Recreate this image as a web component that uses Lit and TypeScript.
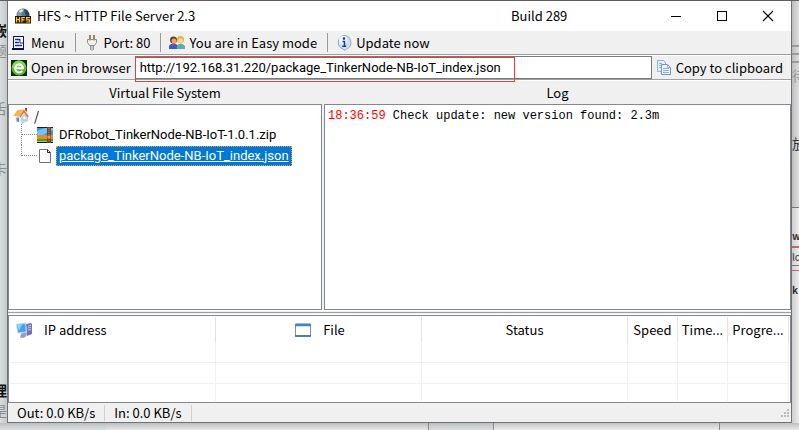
import { LitElement, html, css, svg } from "lit";
import { customElement, property } from "lit/decorators.js";

const icons: Record<string, unknown> = {
  hfs: svg`
    <circle cx="8" cy="7" r="6.5" fill="#4f7fa8"/>
    <path d="M2 5C4 1 8 0 10 1L8 4 6 5 7 8 3 9Z" fill="#8c9a94"/>
    <path d="M9 1c4 1 6 4 5 8l-3-1-1-3z" fill="#2b4257"/>
    <path d="M4 3l3-2 1 2-3 2z" fill="#dfe8ea"/>
    <rect x="0" y="8" width="16" height="7.500" fill="#1c1400"/>
    <path d="M1.500 9v5.500M4.500 9v5.500M1.500 11.700h3M6.900 14.500V9.600h3.100M6.900 11.800h2.600M14.900 9.600h-3.300v2.200h3v2.200h-3.400" fill="none" stroke="#ffc61a" stroke-width="1.200"/>`,
  menu: svg`
    <rect x="2.500" y="1.500" width="10" height="12" fill="#fff" stroke="#101060"/>
    <path d="M4 4.500h5M4 7.500h4M4 10.500h7" stroke="#1726b8" stroke-width="1.400"/>
    <path d="M1 14h12" stroke="#101030" stroke-width="2"/>
    <path d="M9 4v4h3" fill="none" stroke="#1726b8"/>`,
  plug: svg`
    <path d="M6 0v4M10 0v4" stroke="#7c6a3a" stroke-width="1.600"/>
    <path d="M3.500 4.500h9v3l-2 3h-5l-2-3z" fill="#f1f1ee" stroke="#8b8b86"/>
    <path d="M5 5h2M9 5h2" stroke="#c9a13c"/>
    <path d="M6.500 11v4M9.500 11v4M8 11v5" stroke="#9a9a98"/>`,
  users: svg`
    <circle cx="4.500" cy="5" r="3.500" fill="#6b3a1e"/>
    <circle cx="5" cy="6" r="2.500" fill="#e9a376"/>
    <path d="M0 14V11q1-2.500 4.500-2.500T9 11v3z" fill="#2f62c4"/>
    <path d="M3 9l2 3 1-3z" fill="#d33"/>
    <circle cx="11.500" cy="4.500" r="3.500" fill="#e8b13c"/>
    <circle cx="11.500" cy="5.500" r="2.300" fill="#ffd9a8"/>
    <path d="M8 14V11q1-2.500 3.500-2.500T16 11v3z" fill="#58b0a2"/>`,
  info: svg`
    <path d="M8 .5a7 7 0 0 1 2.500 13.500L9 15.500 7 14A7 7 0 0 1 8 .5z" fill="#cfe0f4" stroke="#8aa9cf"/>
    <circle cx="7" cy="5" r="4" fill="#f2f8ff"/>
    <circle cx="8" cy="3.600" r="1.300" fill="#1d3f96"/>
    <path d="M6.500 6.500h2v4.500M6.200 11.200h4" fill="none" stroke="#1d3f96" stroke-width="1.500"/>`,
  browser: svg`
    <rect width="16" height="16" fill="#0d2b0a"/>
    <circle cx="8" cy="8" r="7.500" fill="#5cb531"/>
    <path d="M1 8a7 7 0 0 1 14-1c-5-2-9 1-14 1z" fill="#86d25c"/>
    <path d="M4.500 8.300h7.500A4 4 0 1 0 11.200 10.800" fill="none" stroke="#fff" stroke-width="2"/>`,
  copy: svg`
    <path d="M1.500 .5h6l2 2v9h-8z" fill="#e6f0fc" stroke="#8fb0dd"/>
    <path d="M3 3.500h3M3 5.500h3M3 7.500h3" stroke="#8fb0dd"/>
    <path d="M5.500 4.500h6l3 3v7h-9z" fill="#eef5fe" stroke="#6f94cc"/>
    <path d="M11.500 4.500v3h3M7 8.500h6M7 10.500h6M7 12.500h6" fill="none" stroke="#8fb0dd"/>`,
  home: svg`
    <path d="M2.500 7L6 5l4 4v6.500L2.500 13z" fill="#e3ecf7"/>
    <path d="M8 10l4-5 3 4v4l-6 2.500H8z" fill="#bcd0ea"/>
    <path d="M0 8L4.500 2 11 1.500 6.500 8.500z" fill="#f9b552"/>
    <path d="M11 1.500l5 7-1.500.8L11 4.500 7.500 9.500l-1-1z" fill="#e27a2e"/>
    <path d="M12 0h2v4l-2-2z" fill="#c43a2a"/>
    <path d="M3.500 9.500H6v4.700L3.500 13.300z" fill="#5d8fd0"/>
    <path d="M10.500 8.500h2V11h-2z" fill="#fff"/>`,
  zip: svg`
    <rect width="16" height="16" fill="#1b1b1b"/>
    <path d="M0 1h16v7H0z" fill="#2f9be0"/>
    <path d="M0 4L8 1h8v2L6 8H0z" fill="#6cc5f5"/>
    <path d="M0 8h16v4H0z" fill="#e8892a"/>
    <path d="M0 12h16v3H0z" fill="#4f9a2e"/>
    <path d="M0 14h16v1H0z" fill="#9bcf3a"/>
    <path d="M10 0h4v16h-4z" fill="#7a3f1d"/>
    <path d="M12 1v14" stroke="#c9a888" stroke-dasharray="1 1"/>
    <path d="M10.500 8.500h3v3h-3z" fill="#e0a060"/>`,
  page: svg`
    <path d="M2.500 1.500h8l3 3v10h-11z" fill="#fff" stroke="#757575"/>
    <path d="M10.500 1.500v3h3" fill="none" stroke="#222"/>`,
  computer: svg`
    <path d="M10 2l5-1 1 1v10l-5 2z" fill="#7474b4"/>
    <path d="M12 4l3-.5M12 6l3-.5M12 8l3-.5" stroke="#c3c3ea"/>
    <path d="M0 2l10-1.500 1 10-9.500 1z" fill="#b9cdec"/>
    <path d="M1.300 3l7.700-1 .8 7.500-7.500.8z" fill="#3da5ee"/>
    <path d="M1.300 3l5-.7L3 9z" fill="#8ad2fb"/>
    <path d="M5 11.500l4-1 2 1-1 3-3 1.500-3-.5z" fill="#9c9cc4"/>`,
  frame: svg`
    <rect x=".5" y="2" width="15" height="12" rx="1" fill="#fff" stroke="#7e8fb8"/>
    <path d="M0 3h16" stroke="#3a86d4" stroke-width="2.500"/>
    <path d="M0 14h16" stroke="#27479c" stroke-width="1.300"/>`,
  minimize: svg`<path d="M3 8.500h10" stroke="#000"/>`,
  maximize: svg`<rect x="3.500" y="3.500" width="9" height="9" fill="none" stroke="#000"/>`,
  close: svg`<path d="M3 3l10 10M13 3L3 13" stroke="#000" stroke-width="1.100"/>`,
  grip: svg`<path d="M12 4h2v2h-2zM9 7h2v2H9zM12 7h2v2h-2zM6 10h2v2H6zM9 10h2v2H9zM12 10h2v2h-2z" fill="#bcbcbc"/>`,
};

@customElement("hfs-icon")
class HfsIcon extends LitElement {
  @property() name = "";
  static styles = css`
    :host { display: block; flex: none; width: 16px; height: 16px; }
    .art { display: block; width: 16px; height: 16px; }
  `;
  render() {
    return html`<svg class="art" viewBox="0 0 16 16" aria-hidden="true">${icons[this.name]}</svg>`;
  }
}

const tools = [
  { icon: "menu", label: "Menu" },
  { icon: "plug", label: "Port: 80" },
  { icon: "users", label: "You are in Easy mode" },
  { icon: "info", label: "Update now" },
];

@customElement("app-root")
class AppRoot extends LitElement {
  static styles = css`
    * { box-sizing: border-box; }
    :host {
      display: grid;
      grid-template: 1px 1fr 7px / 7px minmax(0, 1fr) 7px;
      height: 100vh;
      overflow: hidden;
      font: 13px/16px "Noto Sans CJK SC", "Noto Sans", sans-serif;
      color: #000;
      background: #d6dadb;
    }
    .above { grid-column: 1 / -1; background: #625c5e; }
    .side { overflow: hidden; display: flex; flex-direction: column; font-size: 14px; line-height: 20px; }
    .side span { flex: none; height: 20px; white-space: nowrap; }
    .left { align-items: flex-end; background: linear-gradient(90deg, #d9dddd, #c5c9c9); color: #8a8c8c; padding-top: 19px; }
    .left .strong { color: #111; font-weight: 700; }
    .gap-l { margin-top: 38px; }
    .gap-m { margin-top: 40px; }
    .gap-xl { margin-top: 202px; }
    .right { background: linear-gradient(90deg, #bdbdbd, #dedede); color: #333; }
    .right .lines { height: 18px; margin-top: 44px; border: solid #999; border-width: 2px 0; background: linear-gradient(#999, #999) center / 100% 2px no-repeat; }
    .right .faint { color: #999; margin-top: 2px; }
    .right .word { margin-top: 48px; }
    .right .sheet { margin-top: 54px; flex: 1; border-top: 1px solid #777; background: linear-gradient(90deg, #cfcfcf, #ececec); font-size: 10px; font-weight: 700; }
    .right .sheet span { display: block; }
    .sheet .top { margin-top: 18px; }
    .sheet .rule { border-top: 2px solid #b96a6a; border-bottom: 1px solid #777; font-weight: 400; line-height: 17px; }
    .sheet .tab { border-top: 1px solid #e55; margin-top: 4px; line-height: 38px; }
    .below { grid-column: 1 / -1; display: flex; background: linear-gradient(#bcbfbf, #dde0e0); }
    .below i { border-right: 1px solid #888; }
    .below .b1 { flex: 106; border: 0; }
    .b2 { flex: 324; background: linear-gradient(#bebebe, #e8e8e8); }
    .b3 { flex: 64; }
    .b4 { flex: 226; background: linear-gradient(#c4c4c4, #eee); }
    .below .b5 { flex: 79; border: 0; background: linear-gradient(#c0c0c0, #eaeaea); }

    .window { display: flex; flex-direction: column; min-width: 0; border: 1px solid #6f7274; border-top: 0; background: #f0f0f0; }
    button { display: flex; align-items: center; gap: 4px; margin: 0; padding: 0; border: 0; background: none; font: inherit; color: inherit; white-space: nowrap; }
    .title { display: flex; align-items: center; height: 30px; padding-left: 7px; background: #fff; }
    .title h1 { margin: 0 0 0 6px; font: inherit; flex: 1; }
    .build { width: 142px; }
    .title button { width: 46px; height: 30px; justify-content: center; }
    .tools { display: flex; align-items: center; height: 24px; padding-left: 3px; border-bottom: 1px solid #a0a0a0; }
    .tools button { padding-right: 10px; }
    .tools button + button { border-left: 1px solid #999; padding-left: 8px; height: 19px; }
    .address { display: flex; align-items: center; height: 25px; padding: 1px 8px 1px 3px; border-bottom: 1px solid #a0a0a0; border-top: 1px solid #fff; }
    .field { position: relative; flex: 1; margin: 0 4px; height: 23px; }
    .field input { display: block; width: 100%; height: 23px; padding: 0 4px; border: 1px solid #7a7a7a; background: #fff; font: 13px Roboto, sans-serif; color: inherit; outline: 0; }
    .mark { position: absolute; left: 0; top: 1px; width: 380px; height: 25px; border: 1px solid #f0393c; pointer-events: none; }
    .panes { display: grid; grid-template-columns: minmax(0, 314fr) minmax(0, 467fr); column-gap: 2px; flex: 1; min-height: 0; border-top: 1px solid #fff; }
    .pane { display: flex; flex-direction: column; min-height: 0; }
    .pane h2 { margin: 0; height: 23px; font: inherit; line-height: 24px; text-align: center; }
    .box { flex: 1; border: 1px solid #828790; background: #fff; }
    .tree { padding: 2px 0 0 4px; }
    .tree ul { list-style: none; margin: 0 0 0 8px; padding: 0; }
    .node { display: flex; align-items: center; gap: 5px; height: 17px; }
    .tree li { display: flex; align-items: center; height: 21px; }
    .branch { width: 16px; height: 21px; border-left: 1px dotted #888; background: repeating-linear-gradient(90deg, #888 0 1px, #fff 1px 2px) 0 10px / 100% 1px no-repeat; }
    .last .branch { height: 11px; align-self: flex-start; }
    .name { margin-left: 3px; border: 1px solid transparent; padding: 0 2px; height: 20px; font: 13px/18px Roboto, sans-serif; color: inherit; text-decoration: none; }
    .last .name { border: 1px dotted #ff9a3c; background: #0078d7; color: #fff; text-decoration: underline; }
    .log { padding: 3px; font: 12px/16px "Liberation Mono", monospace; }
    .log time { color: #f00; }
    .split { height: 5px; border-bottom: 1px solid #fff; border-top: 1px solid #fff; background: linear-gradient(#a0a0a0, #a0a0a0) 0 1px / 100% 1px no-repeat #f0f0f0; }
    .list { height: 88px; border: 1px solid #828790; background: #fff; padding: 1px; }
    table { width: 100%; table-layout: fixed; border-collapse: separate; border-spacing: 0; }
    .c1 { width: 206px; } .c2 { width: 206px; } .c3 { width: 50px; } .c4 { width: 61px; }
    th { height: 25px; padding: 0 3px; font-weight: 400; border-right: 1px solid #e2e2e2; overflow: hidden; white-space: nowrap; }
    td { height: 21px; padding: 0; border-right: 1px solid #f0f0f0; border-bottom: 1px solid #f0f0f0; }
    tr:last-child td { height: 17px; border-bottom: 0; }
    .cell { display: flex; align-items: center; gap: 12px; padding-left: 3px; }
    .mid { justify-content: center; }
    .status { display: flex; align-items: center; height: 19px; }
    .status span { padding: 0 9px; border-right: 1px solid #d0d0d0; }
    .status hfs-icon { margin-left: auto; }
  `;

  render() {
    return html`
      <div class="above"></div>
      <div class="side left">
        <span class="strong">嵌</span><span>题</span><span class="gap-l">舌</span>
        <span class="gap-m">卡</span><span class="strong gap-xl">理</span><span>是</span>
      </div>
      <main class="window">
        <header class="title">
          <hfs-icon name="hfs"></hfs-icon>
          <h1>HFS ~ HTTP File Server 2.3</h1>
          <span class="build">Build 289</span>
          ${["minimize", "maximize", "close"].map((n) => html`<button aria-label=${n}><hfs-icon name=${n}></hfs-icon></button>`)}
        </header>
        <nav class="tools">
          ${tools.map((t) => html`<button><hfs-icon name=${t.icon}></hfs-icon>${t.label}</button>`)}
        </nav>
        <div class="address">
          <button><hfs-icon name="browser"></hfs-icon>Open in browser</button>
          <div class="field">
            <input aria-label="Address" .value=${"http://192.168.31.220/package_TinkerNode-NB-IoT_index.json"} />
            <div class="mark"></div>
          </div>
          <button><hfs-icon name="copy"></hfs-icon>Copy to clipboard</button>
        </div>
        <div class="panes">
          <section class="pane">
            <h2>Virtual File System</h2>
            <div class="box tree">
              <div class="node"><hfs-icon name="home"></hfs-icon>/</div>
              <ul>
                <li><span class="branch"></span><hfs-icon name="zip"></hfs-icon><a class="name" href="#zip">DFRobot_TinkerNode-NB-IoT-1.0.1.zip</a></li>
                <li class="last"><span class="branch"></span><hfs-icon name="page"></hfs-icon><a class="name" href="#json">package_TinkerNode-NB-IoT_index.json</a></li>
              </ul>
            </div>
          </section>
          <section class="pane">
            <h2>Log</h2>
            <div class="box log"><time>18:36:59</time> Check update: new version found: 2.3m</div>
          </section>
        </div>
        <div class="split"></div>
        <div class="list">
          <table>
            <colgroup><col class="c1" /><col class="c2" /><col /><col class="c3" /><col class="c3" /><col class="c4" /></colgroup>
            <thead>
              <tr>
                <th><div class="cell"><hfs-icon name="computer"></hfs-icon>IP address</div></th>
                <th><div class="cell mid"><hfs-icon name="frame"></hfs-icon>File</div></th>
                <th>Status</th><th>Speed</th><th>Time...</th><th>Progre...</th>
              </tr>
            </thead>
            <tbody>
              ${[0, 1, 2].map(() => html`<tr><td></td><td></td><td></td><td></td><td></td><td></td></tr>`)}
            </tbody>
          </table>
        </div>
        <footer class="status">
          <span>Out: 0.0 KB/s</span><span>In: 0.0 KB/s</span>
          <hfs-icon name="grip"></hfs-icon>
        </footer>
      </main>
      <div class="side right">
        <span class="lines"></span>
        <span class="faint">待</span>
        <span class="word">放</span>
        <div class="sheet"><span class="top">w</span><span class="rule">lo</span><span class="tab">k</span></div>
      </div>
      <div class="below"><i class="b1"></i><i class="b2"></i><i class="b3"></i><i class="b4"></i><i class="b5"></i></div>
    `;
  }
}
